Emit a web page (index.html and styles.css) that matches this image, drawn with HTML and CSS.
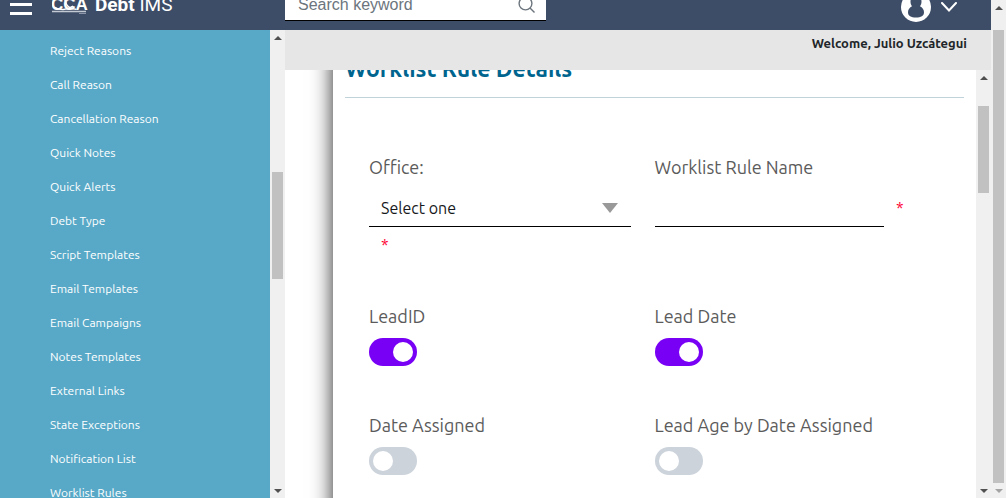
FILE: index.html
```html
<!DOCTYPE html>
<html lang="en">
<head>
<meta charset="utf-8">
<meta name="viewport" content="width=device-width, initial-scale=1">
<title>Debt IMS</title>
<link rel="stylesheet" href="styles.css">
</head>
<body>
<div class="shell">
  <div class="app">
    <header class="topbar">
      <div class="brand">
        <button class="icon-button" type="button" aria-label="Menu">
          <svg width="22" height="22" viewBox="0 0 22 22"><path d="M0 0h22v3H0zM0 9h22v3H0zM0 18h22v3H0z" fill="#fff"/></svg>
        </button>
        <svg class="logo" width="36" height="26" viewBox="0 0 36 26" role="img" aria-label="CCA">
          <text x="-1" y="18" font-family="Liberation Sans, sans-serif" font-weight="700" font-size="17">CCA</text>
          <path d="M2 15c5 3.500 13 3.500 19-1M13 8c1 6 5 9.300 11 9.300" fill="none" stroke="#fff" stroke-width="1.500"/>
          <path d="M0 19.500h34" stroke="#c3c9d3" stroke-width="1.500"/>
          <path d="M27 21.500h7" stroke="#8c96a8" stroke-width="1"/>
        </svg>
        <span class="product"><b>Debt</b> IMS</span>
      </div>
      <form class="search">
        <input class="search-input" type="text" placeholder="Search keyword" aria-label="Search keyword">
        <button class="icon-button" type="button" aria-label="Search">
          <svg width="17" height="18" viewBox="0 0 17 18" fill="none" stroke="#6c757d" stroke-width="1.400"><circle cx="7.500" cy="7.500" r="6.400"/><path d="M12 12l4.500 4.500"/></svg>
        </button>
      </form>
      <button class="icon-button account" type="button" aria-label="Account">
        <svg width="30" height="30" viewBox="0 0 30 30"><circle cx="15" cy="15" r="15" fill="#fff"/><path d="M15 4c-3.500 0-5.500 2.500-5.500 5.500 0 2 .6 3.500 1.500 4.700-2.300 1.100-4 3.300-4 6.100 0 3.700 3 5.200 8 5.200s8-1.500 8-5.200c0-2.800-1.700-5-4-6.100.9-1.200 1.500-2.700 1.500-4.700C20.500 6.500 18.500 4 15 4z" fill="#3e4d67"/></svg>
        <svg width="16" height="10" viewBox="0 0 16 10" fill="none" stroke="#fff" stroke-width="2" stroke-linecap="round"><path d="M1 1l7 7.500L15 1"/></svg>
      </button>
    </header>
    <div class="body">
      <nav class="sidebar" aria-label="Settings">
        <a class="nav-link" href="#">Reject Reasons</a>
        <a class="nav-link" href="#">Call Reason</a>
        <a class="nav-link" href="#">Cancellation Reason</a>
        <a class="nav-link" href="#">Quick Notes</a>
        <a class="nav-link" href="#">Quick Alerts</a>
        <a class="nav-link" href="#">Debt Type</a>
        <a class="nav-link" href="#">Script Templates</a>
        <a class="nav-link" href="#">Email Templates</a>
        <a class="nav-link" href="#">Email Campaigns</a>
        <a class="nav-link" href="#">Notes Templates</a>
        <a class="nav-link" href="#">External Links</a>
        <a class="nav-link" href="#">State Exceptions</a>
        <a class="nav-link" href="#">Notification List</a>
        <a class="nav-link" href="#">Worklist Rules</a>
      </nav>
      <div class="scrollbar" aria-hidden="true">
        <span class="arrow arrow-up"></span>
        <div class="track" style="grid-template-rows: 127fr 107fr 204fr"><i class="thumb"></i></div>
        <span class="arrow arrow-down"></span>
      </div>
      <main class="main">
        <div class="welcome">Welcome, Julio Uzcátegui</div>
        <div class="workspace">
          <div class="viewport">
            <section class="card">
              <h1 class="title">Worklist Rule Details</h1>
              <form class="fields">
                <div class="field field-text">
                  <label class="label" for="office">Office:</label>
                  <select class="select" id="office"><option>Select one</option></select>
                  <span class="required below">*</span>
                </div>
                <div class="field field-text">
                  <label class="label" for="rule-name">Worklist Rule Name</label>
                  <div class="input-row">
                    <input class="input" id="rule-name" type="text">
                    <span class="required">*</span>
                  </div>
                </div>
                <div class="field">
                  <label class="label" for="lead-id">LeadID</label>
                  <input class="switch" id="lead-id" type="checkbox" checked>
                </div>
                <div class="field">
                  <label class="label" for="lead-date">Lead Date</label>
                  <input class="switch" id="lead-date" type="checkbox" checked>
                </div>
                <div class="field">
                  <label class="label" for="date-assigned">Date Assigned</label>
                  <input class="switch" id="date-assigned" type="checkbox">
                </div>
                <div class="field">
                  <label class="label" for="lead-age">Lead Age by Date Assigned</label>
                  <input class="switch" id="lead-age" type="checkbox">
                </div>
              </form>
            </section>
          </div>
          <div class="scrollbar" aria-hidden="true">
            <span class="arrow arrow-up"></span>
            <div class="track" style="grid-template-rows: 21fr 87fr 290fr"><i class="thumb"></i></div>
            <span class="arrow arrow-down"></span>
          </div>
        </div>
      </main>
    </div>
  </div>
  <div class="scrollbar" aria-hidden="true">
    <span class="arrow arrow-up"></span>
    <div class="track" style="grid-template-rows: 15fr 453fr 0fr"><i class="thumb"></i></div>
    <span class="arrow arrow-down is-disabled"></span>
  </div>
</div>
</body>
</html>
```
FILE: styles.css
```css
* { box-sizing: border-box; }
body {
  margin: 0;
  font-family: Ubuntu, "Noto Sans", sans-serif;
  color: #212529;
  background: #fff;
}
.shell { display: flex; height: 100vh; overflow: hidden; }
.app { flex: 1; min-width: 0; display: flex; flex-direction: column; overflow: hidden; }

.icon-button {
  display: flex;
  align-items: center;
  padding: 0;
  border: 0;
  background: none;
}

/* Top bar, partly scrolled out of view */
.topbar {
  display: flex;
  flex: none;
  align-items: center;
  height: 50px;
  margin-top: -20px;
  background: #3e4d67;
}
.brand { display: flex; align-items: center; width: 285px; padding-left: 10px; }
.logo { margin-left: 20px; fill: #fff; }
.product { margin-left: 7px; color: #fff; font: 19px/24px Roboto, sans-serif; }
.search {
  display: flex;
  align-items: center;
  width: 261px;
  height: 32px;
  padding: 0 11px 0 13px;
  background: #fff;
  border-bottom: 1px solid #000;
}
.search-input {
  flex: 1;
  min-width: 0;
  padding: 0;
  border: 0;
  outline: 0;
  font: 16px/24px "Liberation Sans", Arial, sans-serif;
}
.search-input::placeholder { color: #6c757d; opacity: 1; }
.account { gap: 10px; margin-left: auto; padding: 4px 34px 0 0; }

.body { flex: 1; min-height: 0; display: flex; }
.sidebar {
  width: 270px;
  padding: 4px 0 0 50px;
  overflow: hidden;
  background: #58a9c7;
}
.nav-link {
  display: block;
  color: #fff;
  font-size: 12px;
  line-height: 34px;
  text-decoration: none;
}

.main { flex: 1; min-width: 0; display: flex; flex-direction: column; }
.welcome {
  height: 40px;
  padding: 3px 24px;
  background: #e6e6e6;
  font-size: 13px;
  font-weight: 700;
  line-height: 20px;
  text-align: right;
}
.workspace { flex: 1; min-height: 0; display: flex; }
.viewport { flex: 1; min-width: 0; padding-left: 48px; overflow: hidden; }
.card {
  min-height: 100%;
  margin-top: -20px;
  padding: 0 12px 40px;
  background: #fff;
  box-shadow: 0 0 20px rgba(0, 0, 0, .85);
}
.title {
  margin: 0;
  padding: 3px 0 13px;
  border-bottom: 1px solid #c0d2da;
  color: #00658e;
  font-size: 23px;
  line-height: 31px;
}
.fields { display: grid; grid-template-columns: 1fr 1fr; padding: 55px 24px 0; }
.field { display: flex; flex-direction: column; align-items: stretch; height: 109px; padding-right: 24px; }
.field-text { height: 149px; }
.label { color: #5b5b5b; font-size: 18px; line-height: 28px; }
.select, .input {
  width: 100%;
  height: 38px;
  padding: 0 12px;
  border: 0;
  border-bottom: 1px solid #000;
  border-radius: 0;
  outline: 0;
  background: #fff;
  color: #16181b;
  font: inherit;
  font-size: 16px;
}
.select {
  flex: none;
  margin-top: 8px;
  appearance: none;
  background: url("data:image/svg+xml,%3Csvg xmlns='http://www.w3.org/2000/svg' width='16' height='10'%3E%3Cpath d='M0 0h16L8 10z' fill='%23999'/%3E%3C/svg%3E") no-repeat right 13px center;
}
.input-row { display: flex; align-items: center; gap: 12px; margin-top: 8px; }
.input { flex: 1; min-width: 0; }
.required { width: 20px; color: #f03; font-size: 16px; line-height: 20px; }
.below { margin: 8px 0 0 12px; }

.switch {
  flex: none;
  display: flex;
  align-items: center;
  width: 48px;
  height: 28px;
  margin: 8px 0 0;
  padding: 0 4px;
  border-radius: 14px;
  background: #ccd3db;
  appearance: none;
}
.switch::before { content: ""; width: 20px; height: 20px; border-radius: 50%; background: #fff; }
.switch:checked { justify-content: flex-end; background: #7800f5; }

.scrollbar { flex: none; display: flex; flex-direction: column; width: 15px; background: #f0f0f0; }
.arrow { display: flex; align-items: center; justify-content: center; height: 15px; color: #505050; }
.arrow::before { content: ""; border: 4px solid transparent; }
.arrow-up::before { border-top: 0; border-bottom-color: currentColor; }
.arrow-down::before { border-bottom: 0; border-top-color: currentColor; }
.is-disabled { color: #a3a3a3; }
.track { flex: 1; display: grid; padding: 0 2px; }
.thumb { grid-row: 2; background: #c1c1c1; }
```
